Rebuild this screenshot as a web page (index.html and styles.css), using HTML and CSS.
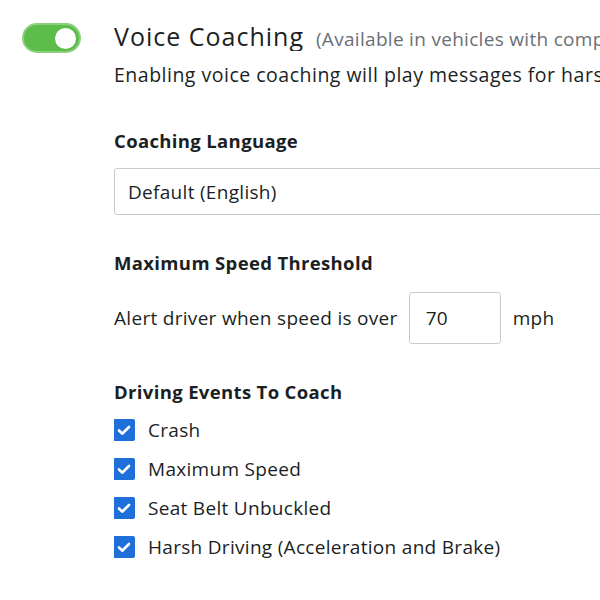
FILE: index.html
```html
<!DOCTYPE html>
<html>
<head>
<meta charset="utf-8">
<link rel="stylesheet" href="styles.css">
</head>
<body>
<div class="page">
  <div class="toggle-col">
    <div class="toggle"><span class="knob"></span></div>
  </div>
  <div class="content">
    <div class="title-row">
      <span class="title">Voice Coaching</span>
      <span class="note">(Available in vehicles with compatible hardware)</span>
    </div>
    <p class="desc">Enabling voice coaching will play messages for harsh driving events in the vehicle.</p>

    <h3 class="label lang-label">Coaching Language</h3>
    <div class="select">Default (English)</div>

    <h3 class="label speed-label">Maximum Speed Threshold</h3>
    <div class="speed-row">
      <span>Alert driver when speed is over</span>
      <div class="num-input">70</div>
      <span>mph</span>
    </div>

    <h3 class="label events-label">Driving Events To Coach</h3>
    <ul class="checks">
      <li><span class="box"><svg viewBox="0 0 22 22" width="22" height="22"><path d="M6 11.5l3.2 3.2L16 8" fill="none" stroke="#fff" stroke-width="2.6" stroke-linecap="round" stroke-linejoin="round"/></svg></span>Crash</li>
      <li><span class="box"><svg viewBox="0 0 22 22" width="22" height="22"><path d="M6 11.5l3.2 3.2L16 8" fill="none" stroke="#fff" stroke-width="2.6" stroke-linecap="round" stroke-linejoin="round"/></svg></span>Maximum Speed</li>
      <li><span class="box"><svg viewBox="0 0 22 22" width="22" height="22"><path d="M6 11.5l3.2 3.2L16 8" fill="none" stroke="#fff" stroke-width="2.6" stroke-linecap="round" stroke-linejoin="round"/></svg></span>Seat Belt Unbuckled</li>
      <li><span class="box"><svg viewBox="0 0 22 22" width="22" height="22"><path d="M6 11.5l3.2 3.2L16 8" fill="none" stroke="#fff" stroke-width="2.6" stroke-linecap="round" stroke-linejoin="round"/></svg></span>Harsh Driving (Acceleration and Brake)</li>
    </ul>
  </div>
</div>
</body>
</html>
```
FILE: styles.css
```css
html, body {
  margin: 0;
  padding: 0;
  background: #fff;
  overflow: hidden;
}
body {
  font-family: "Open Sans", "Liberation Sans", sans-serif;
  color: #1b1f24;
  width: 600px;
  height: 600px;
}
.page {
  display: flex;
  padding: 23px 0 0 22px;
}
.toggle-col {
  width: 92px;
  flex: none;
}
.toggle {
  width: 59px;
  height: 30px;
  box-sizing: border-box;
  border-radius: 15px;
  background: #5cbd4a;
  border: 2px solid #8ccf7e;
  position: relative;
}
.knob {
  position: absolute;
  right: 3px;
  top: 3px;
  width: 21px;
  height: 21px;
  border-radius: 50%;
  background: #fff;
}
.content {
  flex: none;
  width: 486px;
  overflow: hidden;
}
.title-row {
  white-space: nowrap;
  display: flex;
  align-items: baseline;
  gap: 12px;
  height: 30px;
  line-height: 30px;
  margin-top: -2px;
  overflow: hidden;
}
.title {
  font-size: 25px;
  letter-spacing: 1px;
  color: #1b1f24;
}
.note {
  font-size: 19px;
  letter-spacing: 0.3px;
  color: #6b6f75;
}
.desc {
  margin: 12px 0 0;
  font-size: 19.5px;
  line-height: 24px;
  letter-spacing: 0.5px;
  white-space: nowrap;
  overflow: hidden;
}
.label {
  margin: 0;
  font-size: 18.5px;
  line-height: 24px;
  letter-spacing: 0.35px;
  font-weight: 700;
}
.lang-label {
  margin-top: 42px;
}
.select {
  margin-top: 15px;
  margin-right: -20px;
  height: 47px;
  box-sizing: border-box;
  border: 1px solid #c8cbce;
  border-radius: 3px;
  padding-left: 13px;
  display: flex;
  align-items: center;
  font-size: 19px;
  letter-spacing: 0.3px;
}
.speed-label {
  margin-top: 36px;
}
.speed-row {
  margin-top: 17px;
  display: flex;
  align-items: center;
  font-size: 19px;
  letter-spacing: 0.3px;
}
.num-input {
  width: 92px;
  height: 52px;
  box-sizing: border-box;
  border: 1px solid #c8cbce;
  border-radius: 3px;
  display: flex;
  align-items: center;
  padding-left: 16px;
  margin: 0 12px 0 11px;
}
.events-label {
  margin-top: 36px;
}
.checks {
  list-style: none;
  margin: 15px 0 0;
  padding: 0;
}
.checks li {
  display: flex;
  align-items: center;
  height: 22px;
  margin-bottom: 17px;
  font-size: 19px;
  letter-spacing: 0.3px;
}
.box {
  width: 22px;
  height: 22px;
  border-radius: 2px;
  background: #1e6fd9;
  margin-right: 13px;
  margin-left: -1px;
  display: flex;
}
```
